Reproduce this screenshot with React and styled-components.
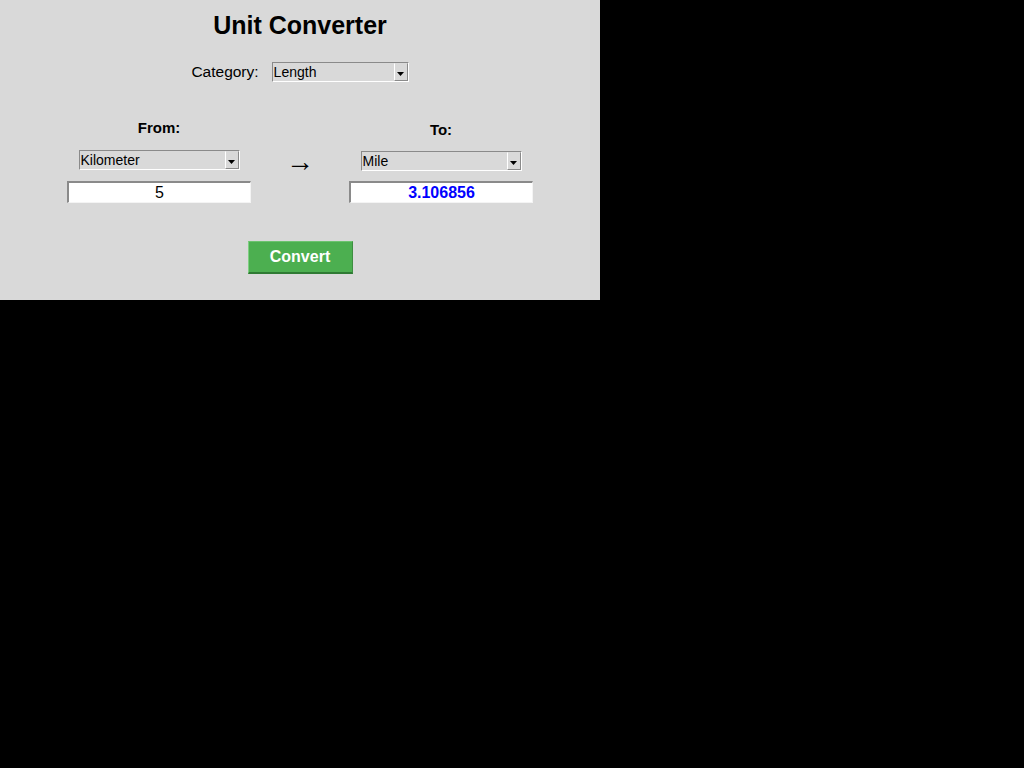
import React, { useState } from "react";
import styled, { createGlobalStyle } from "styled-components";

const GlobalStyle = createGlobalStyle`
  body {
    margin: 0;
    background: #000000;
    font-family: "Liberation Sans", Arial, sans-serif;
  }
`;

const Window = styled.div`
  width: 600px;
  height: 300px;
  background: #d9d9d9;
  display: flex;
  flex-direction: column;
  align-items: center;
  padding-top: 11px;
  box-sizing: border-box;
`;

const Title = styled.h1`
  margin: 0;
  font-size: 25px;
  line-height: 28px;
  font-weight: 700;
  color: #000000;
`;

const CategoryRow = styled.div`
  margin-top: 23px;
  display: flex;
  align-items: center;
  gap: 13px;
  height: 20px;
`;

const Label = styled.span`
  font-size: 15.5px;
  color: #000000;
`;

const SelectWrap = styled.div`
  position: relative;
  width: ${(p) => p.$width}px;
  height: 20px;
  box-sizing: border-box;
  border-style: solid;
  border-width: 1px;
  border-color: #8a8a8a #ffffff #ffffff #8a8a8a;
  background: #d9d9d9;
`;

const NativeSelect = styled.select`
  appearance: none;
  -webkit-appearance: none;
  width: 100%;
  height: 100%;
  border: none;
  outline: none;
  background: transparent;
  padding: 0 0 0 1px;
  margin: 0;
  font-family: "Liberation Sans", Arial, sans-serif;
  font-size: 14px;
  color: #000000;
`;

const ArrowBox = styled.div`
  position: absolute;
  right: 0;
  top: 0;
  width: 14px;
  height: 18px;
  box-sizing: border-box;
  border-style: solid;
  border-width: 1px;
  border-color: #d9d9d9 #8a8a8a #8a8a8a #ffffff;
  display: flex;
  align-items: flex-end;
  justify-content: center;
  padding-bottom: 4px;
  pointer-events: none;
`;

const Converter = styled.div`
  margin-top: 36px;
  display: grid;
  grid-template-columns: 184px 98px 184px;
  align-items: start;
`;

const Side = styled.div`
  display: flex;
  flex-direction: column;
  align-items: center;
`;

const SideLabel = styled.div`
  padding-top: ${(p) => p.$drop}px;
  font-size: 15px;
  line-height: 18px;
  font-weight: 700;
  color: #000000;
`;

const SelectSlot = styled.div`
  margin-top: ${(p) => p.$gap}px;
`;

const ValueInput = styled.input`
  margin-top: ${(p) => p.$gap}px;
  width: 184px;
  height: 22px;
  box-sizing: border-box;
  border-style: solid;
  border-width: 2px 1px 1px 2px;
  border-color: #8a8a8a #f4f4f4 #f4f4f4 #8a8a8a;
  background: #ffffff;
  outline: none;
  text-align: center;
  padding: 0;
  font-family: "Liberation Sans", Arial, sans-serif;
  font-size: 16px;
  font-weight: ${(p) => (p.$result ? 700 : 400)};
  color: ${(p) => (p.$result ? "#0000ff" : "#000000")};
`;

const ArrowCell = styled.div`
  display: flex;
  justify-content: center;
  padding-top: 28px;
  font-size: 28px;
  line-height: 32px;
  color: #000000;
`;

const ConvertButton = styled.button`
  margin-top: 38px;
  width: 105px;
  height: 33px;
  box-sizing: border-box;
  background: #4caf50;
  border-style: solid;
  border-width: 1px 1px 2px 1px;
  border-color: #6cc36f #3e8e41 #2f7a33 #7fcf82;
  color: #ffffff;
  font-family: "Liberation Sans", Arial, sans-serif;
  font-size: 16px;
  font-weight: 700;
  padding: 0;
  cursor: pointer;
`;

const DropArrow = () => (
  <svg width="7" height="4" viewBox="0 0 7 4">
    <path d="M0 0 H7 L3.5 4 Z" fill="#000000" />
  </svg>
);

const Dropdown = ({ width, value, options, onChange }) => (
  <SelectWrap $width={width}>
    <NativeSelect value={value} onChange={(e) => onChange(e.target.value)}>
      {options.map((o) => (
        <option key={o}>{o}</option>
      ))}
    </NativeSelect>
    <ArrowBox>
      <DropArrow />
    </ArrowBox>
  </SelectWrap>
);

const units = {
  Length: { Kilometer: 1000, Meter: 1, Mile: 1609.344, Foot: 0.3048 },
  Weight: { Kilogram: 1, Gram: 0.001, Pound: 0.45359237 },
};

const App = () => {
  const [category, setCategory] = useState("Length");
  const [from, setFrom] = useState("Kilometer");
  const [to, setTo] = useState("Mile");
  const [amount, setAmount] = useState("5");
  const [result, setResult] = useState("3.106856");

  const convert = () => {
    const table = units[category];
    const v = parseFloat(amount);
    if (isNaN(v) || !table[from] || !table[to]) return;
    setResult(((v * table[from]) / table[to]).toFixed(6));
  };

  return (
    <>
      <GlobalStyle />
      <Window>
        <Title>Unit Converter</Title>
        <CategoryRow>
          <Label>Category:</Label>
          <Dropdown
            width={137}
            value={category}
            options={Object.keys(units)}
            onChange={setCategory}
          />
        </CategoryRow>
        <Converter>
          <Side>
            <SideLabel $drop={1}>From:</SideLabel>
            <SelectSlot $gap={13}>
              <Dropdown
                width={161}
                value={from}
                options={Object.keys(units[category])}
                onChange={setFrom}
              />
            </SelectSlot>
            <ValueInput $gap={11} value={amount} onChange={(e) => setAmount(e.target.value)} />
          </Side>
          <ArrowCell>→</ArrowCell>
          <Side>
            <SideLabel $drop={3}>To:</SideLabel>
            <SelectSlot $gap={12}>
              <Dropdown
                width={161}
                value={to}
                options={Object.keys(units[category])}
                onChange={setTo}
              />
            </SelectSlot>
            <ValueInput $gap={10} $result value={result} readOnly />
          </Side>
        </Converter>
        <ConvertButton onClick={convert}>Convert</ConvertButton>
      </Window>
    </>
  );
};

export default App;
